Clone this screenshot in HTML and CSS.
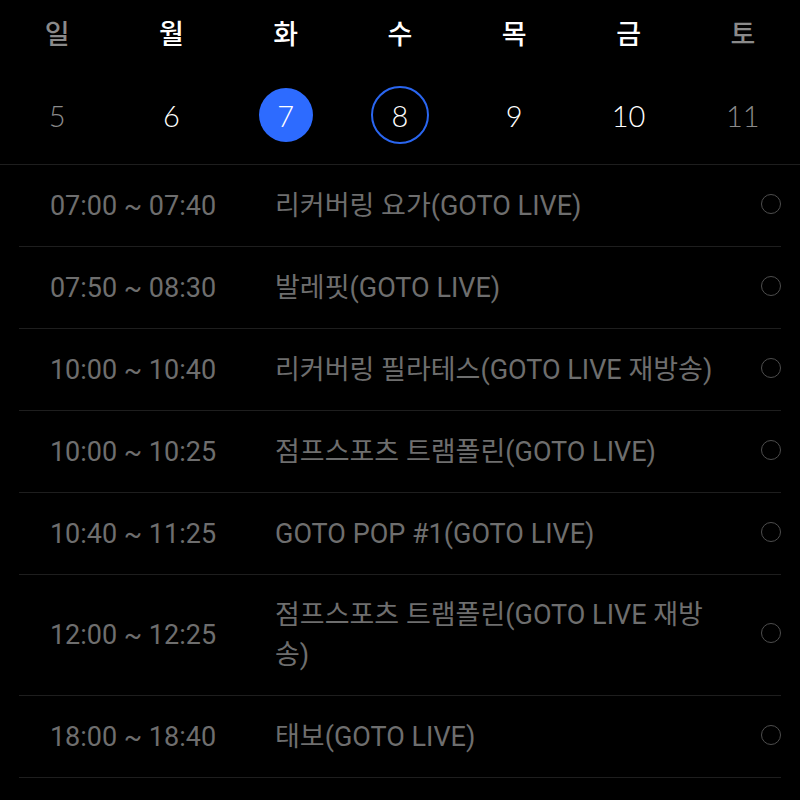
FILE: index.html
```html
<!DOCTYPE html>
<html lang="ko">
<head>
<meta charset="utf-8">
<link rel="stylesheet" href="styles.css">
</head>
<body>
<div class="app">
  <header class="week">
    <div class="row names">
      <span class="muted">일</span><span>월</span><span>화</span><span>수</span><span>목</span><span>금</span><span class="muted">토</span>
    </div>
    <div class="row dates">
      <div class="cell"><span class="day muted">5</span></div>
      <div class="cell"><span class="day">6</span></div>
      <div class="cell"><span class="day selected">7</span></div>
      <div class="cell"><span class="day today">8</span></div>
      <div class="cell"><span class="day">9</span></div>
      <div class="cell"><span class="day">10</span></div>
      <div class="cell"><span class="day muted">11</span></div>
    </div>
  </header>
  <ul class="list">
    <li class="item"><span class="time">07:00 ~ 07:40</span><span class="title">리커버링 요가(GOTO LIVE)</span><span class="radio"></span></li>
    <li class="item"><span class="time">07:50 ~ 08:30</span><span class="title">발레핏(GOTO LIVE)</span><span class="radio"></span></li>
    <li class="item"><span class="time">10:00 ~ 10:40</span><span class="title">리커버링 필라테스(GOTO LIVE 재방송)</span><span class="radio"></span></li>
    <li class="item"><span class="time">10:00 ~ 10:25</span><span class="title">점프스포츠 트램폴린(GOTO LIVE)</span><span class="radio"></span></li>
    <li class="item"><span class="time">10:40 ~ 11:25</span><span class="title">GOTO POP #1(GOTO LIVE)</span><span class="radio"></span></li>
    <li class="item"><span class="time">12:00 ~ 12:25</span><span class="title">점프스포츠 트램폴린(GOTO LIVE 재방송)</span><span class="radio"></span></li>
    <li class="item"><span class="time">18:00 ~ 18:40</span><span class="title">태보(GOTO LIVE)</span><span class="radio"></span></li>
  </ul>
</div>
</body>
</html>
```
FILE: styles.css
```css
html, body {
  margin: 0;
  padding: 0;
  background: #000;
}
body {
  font-family: Roboto, "Noto Sans CJK KR", sans-serif;
  color: #fff;
  width: 800px;
  height: 800px;
  overflow: hidden;
}
.week {
  border-bottom: 1px solid #1e1e1e;
}
.row {
  display: grid;
  grid-template-columns: repeat(7, 1fr);
  text-align: center;
}
.names {
  height: 64px;
  align-items: center;
  font-family: "Noto Sans CJK KR", sans-serif;
  font-weight: 500;
  font-size: 27px;
}
.names span { line-height: 1; }
.muted { color: #8a8a8a; }
.dates {
  padding: 22px 0 20px;
  height: 58px;
}
.cell {
  display: flex;
  justify-content: center;
  align-items: center;
}
.day {
  width: 58px;
  height: 58px;
  box-sizing: border-box;
  border-radius: 50%;
  display: flex;
  justify-content: center;
  align-items: center;
  font-family: Lato, sans-serif;
  font-weight: 300;
  font-size: 29px;
}
.day.selected {
  width: 54px;
  height: 54px;
  background: #2d6bff;
}
.day.today {
  border: 2px solid #2a66f0;
}
.list {
  list-style: none;
  margin: 0;
  padding: 0 19px;
}
.item {
  display: flex;
  align-items: center;
  padding: 20px 0;
  min-height: 41px;
  border-bottom: 1px solid #1e1e1e;
  color: #6e6e6e;
  font-size: 27px;
  line-height: 40px;
}
.time {
  width: 228px;
  flex-shrink: 0;
  text-align: center;
}
.title {
  flex: 1;
  margin-left: 28px;
}
.radio {
  width: 20px;
  height: 20px;
  box-sizing: border-box;
  border: 1.5px solid #4e4e4e;
  border-radius: 50%;
  margin-left: 40px;
  margin-top: -4px;
  flex-shrink: 0;
}
```
